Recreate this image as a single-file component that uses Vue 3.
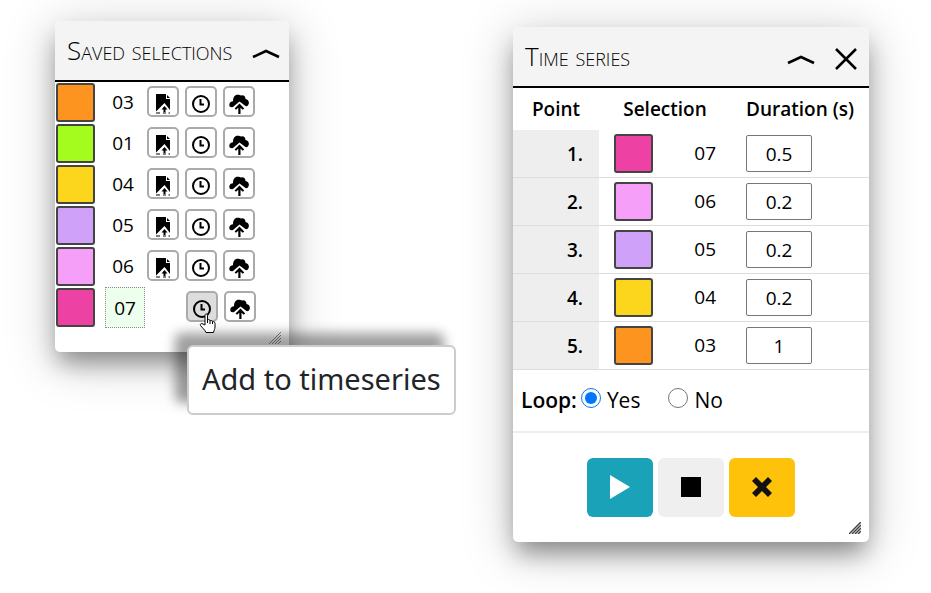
<script setup>
import { ref } from 'vue'

const selections = [
  { name: '03', color: '#fc941f', saved: true },
  { name: '01', color: '#a4fc1f', saved: true },
  { name: '04', color: '#fcd61c', saved: true },
  { name: '05', color: '#d0a1f8', saved: true },
  { name: '06', color: '#f59ff8', saved: true },
  { name: '07', color: '#ed42a4', saved: false },
]
const points = ref([
  { name: '07', color: '#ed42a4', duration: '0.5' },
  { name: '06', color: '#f59ff8', duration: '0.2' },
  { name: '05', color: '#d0a1f8', duration: '0.2' },
  { name: '04', color: '#fcd61c', duration: '0.2' },
  { name: '03', color: '#fc941f', duration: '1' },
])
const loop = ref('yes')
</script>

<template>
  <main class="desktop">
    <section class="panel saved">
      <header class="panel-head">
        <h2>Saved selections</h2>
        <button class="bare" aria-label="Collapse saved selections">
          <svg width="30" height="12" viewBox="0 0 30 12"><path d="M2 10 15 4l13 6" /></svg>
        </button>
      </header>
      <ul class="list">
        <li v-for="s in selections" :key="s.name" class="item" :class="{ current: !s.saved }">
          <span class="swatch" :style="{ background: s.color }"></span>
          <span class="name">{{ s.name }}</span>
          <span class="actions">
            <button v-if="s.saved" class="tool" aria-label="Save to file">
              <svg width="16" height="20" viewBox="0 0 16 20">
                <path d="M1 0h10v5h4v11L9.500 9 1 17.500z" />
                <path d="M12 1l3 3h-3z" />
                <path d="m9.500 12 3 3.500h-2V18h-2v-2.500h-2z" />
                <path d="M1 18.500h4v1H1zM8 18.500h3v1H8zM13.500 18.500H15v1h-1.500z" />
              </svg>
            </button>
            <button class="tool" :class="{ hover: !s.saved }" aria-label="Add to timeseries">
              <svg width="20" height="20" viewBox="0 0 20 20" class="line">
                <circle cx="10" cy="10" r="8" />
                <path d="M9.500 5v5.500H13" />
              </svg>
            </button>
            <button class="tool" aria-label="Upload selection">
              <svg width="20" height="20" viewBox="0 0 20 20">
                <path d="M.3 11C.3 8.500 2 7.500 4 7.300 4 3 6 .5 9 .8c1.500 0 2 .8 3.500.6 2.500-.3 4 1.200 4 3.600 2.500.5 3.800 2.500 3.300 4.500-.4 2-1.800 3-3.300 2.500L10.500 7.500 4 13c-2 .8-3.700-.2-3.700-2z" />
                <path d="m10.500 9.500 4.700 5-1.400 1.200-2.300-2V20h-2.200v-6.300l-2.300 2-1.400-1.200z" />
              </svg>
            </button>
          </span>
        </li>
      </ul>
      <svg class="grip" width="12" height="12" viewBox="0 0 12 12"><path d="M0 12 12 0M3 12l9-9M6 12l6-6M9 12l3-3" /></svg>
    </section>

    <div class="tooltip" role="tooltip">Add to timeseries</div>
    <svg class="pointer" width="18" height="21" viewBox="0 0 18 21">
      <path d="M6 12V2.500C6 .5 8.500.5 8.500 2.500V7c1-.8 2.500-.4 2.500.8 1-.7 2.500-.2 2.500 1 1-.5 2.500 0 2.500 1.500V14c0 2-1 3-1.500 5.500H7C6 17 3 14.500 1.500 12.500c-.8-1.500 1-2.500 2.500-1.500z" />
      <path d="M8.500 7v3M11 8v3M13.500 9v2" />
    </svg>

    <section class="panel series">
      <header class="panel-head">
        <h2>Time series</h2>
        <button class="bare" aria-label="Collapse time series">
          <svg width="30" height="12" viewBox="0 0 30 12"><path d="M2 10 15 4l13 6" /></svg>
        </button>
        <button class="bare" aria-label="Close time series">
          <svg width="24" height="24" viewBox="0 0 24 24"><path d="m2 2 20 20M22 2 2 22" /></svg>
        </button>
      </header>
      <table>
        <thead>
          <tr><th class="c-point">Point</th><th class="c-sel">Selection</th><th class="c-dur">Duration (s)</th></tr>
        </thead>
        <tbody>
          <tr v-for="(p, i) in points" :key="p.name">
            <th scope="row">{{ i + 1 }}.</th>
            <td>
              <div class="pick">
                <span class="swatch" :style="{ background: p.color }"></span>
                <span class="label">{{ p.name }}</span>
              </div>
            </td>
            <td><input v-model="p.duration" type="text" class="duration" :aria-label="'Duration of point ' + (i + 1)"></td>
          </tr>
        </tbody>
      </table>
      <div class="loop" role="radiogroup" aria-labelledby="loop-label">
        <b id="loop-label">Loop:</b>
        <label><input v-model="loop" type="radio" name="loop" value="yes"><span>Yes</span></label>
        <label><input v-model="loop" type="radio" name="loop" value="no"><span>No</span></label>
      </div>
      <div class="controls">
        <button class="play" aria-label="Play"><svg width="20" height="24" viewBox="0 0 20 24"><path d="M0 0v24l20-12z" /></svg></button>
        <button class="stop" aria-label="Stop"><svg width="20" height="20" viewBox="0 0 20 20"><path d="M0 0h20v20H0z" /></svg></button>
        <button class="clear" aria-label="Clear"><svg width="20" height="20" viewBox="0 0 20 20"><path d="m4 0 6 6 6-6 4 4-6 6 6 6-4 4-6-6-6 6-4-4 6-6-6-6z" /></svg></button>
      </div>
      <svg class="grip dark" width="12" height="12" viewBox="0 0 12 12"><path d="M0 12 12 0M3 12l9-9M6 12l6-6M9 12l3-3" /></svg>
    </section>
  </main>
</template>

<style>
body {
  background: #fff;
}
</style>

<style scoped>
.desktop {
  position: relative;
  min-height: 100vh;
  overflow: hidden;
  font-family: "Open Sans", "Noto Sans", sans-serif;
  font-size: 19px;
  color: #000;
}
.desktop * {
  box-sizing: border-box;
}
svg {
  display: block;
}
button {
  padding: 0;
  font: inherit;
  cursor: pointer;
}
.panel {
  position: absolute;
  background: #fff;
  border-radius: 5px;
  box-shadow: 0 14px 24px -4px rgba(0, 0, 0, 0.4), 0 8px 50px 4px rgba(0, 0, 0, 0.18);
}
.saved {
  left: 55px;
  top: 21px;
  width: 234px;
  padding-bottom: 24px;
}
.series {
  left: 513px;
  top: 27px;
  width: 356px;
}
.panel-head {
  display: flex;
  align-items: center;
  height: 61px;
  padding: 4px 11px 0 12px;
  background: #f4f4f4;
  border-bottom: 2px solid #000;
  border-radius: 5px 5px 0 0;
}
h2 {
  flex: 1;
  margin: 0 0 6px;
  font-size: 26px;
  font-weight: 350;
  font-variant: small-caps;
  line-height: 32px;
  white-space: nowrap;
}
.bare {
  border: 0;
  background: none;
}
.bare path {
  fill: none;
  stroke: #000;
  stroke-width: 2.500;
}
.saved .panel-head {
  padding-right: 8px;
}
.series .panel-head {
  gap: 18px;
}
.swatch {
  width: 39px;
  height: 39px;
  border: 2px solid #444;
  border-radius: 3px;
}
.list {
  list-style: none;
  margin: 0;
  padding: 0;
}
.item {
  display: flex;
  align-items: center;
  height: 41px;
  padding: 0 34px 0 1px;
}
.name {
  display: grid;
  place-items: center;
  width: 40px;
  height: 41px;
  margin-left: 8px;
  padding-bottom: 2px;
  border: 1px solid transparent;
}
.current .name {
  margin-left: 10px;
  padding-bottom: 0;
  background: #edffed;
  border: 1px dotted #888;
}
.current {
  padding-right: 33px;
}
.actions {
  flex: 1;
  display: flex;
  justify-content: flex-end;
  gap: 6px;
}
.tool {
  display: grid;
  place-items: center;
  width: 32px;
  height: 31px;
  padding-top: 4px;
  margin-bottom: 2px;
  border: 2px solid #aaa;
  border-radius: 5px;
  background: #fff;
}
.tool.hover {
  background: #ddd;
}
.line {
  fill: none;
  stroke: #000;
  stroke-width: 2;
}
.grip {
  position: absolute;
  right: 8px;
  bottom: 8px;
  stroke: #888;
  stroke-width: 1;
}
.grip.dark {
  stroke: #444;
  stroke-width: 1.500;
}
.tooltip {
  position: absolute;
  left: 187px;
  top: 345px;
  padding: 12px 13px 14px;
  border: 2px solid #ccc;
  border-radius: 6px;
  background: #fff;
  box-shadow: -12px -12px 12px rgba(0, 0, 0, 0.38);
  color: #212529;
  font-family: "Noto Sans", sans-serif;
  font-size: 29px;
  line-height: 40px;
  white-space: nowrap;
}
.pointer {
  position: absolute;
  left: 199px;
  top: 313px;
  fill: #fff;
  stroke: #000;
  stroke-width: 1;
}
table {
  width: 100%;
  border-spacing: 0;
  table-layout: fixed;
}
th {
  font-weight: 600;
}
thead th {
  height: 42px;
  padding: 0;
}
.c-point {
  width: 86px;
}
.c-sel {
  width: 132px;
}
tbody th,
td {
  height: 48px;
  border-bottom: 1px solid #ddd;
}
tbody th {
  padding: 0 16px 0 0;
  background: #eee;
  text-align: right;
}
td {
  padding: 0 15px;
}
.pick {
  display: flex;
  align-items: center;
  justify-content: space-between;
}
.label {
  padding-bottom: 2px;
}
.duration {
  display: block;
  width: 66px;
  height: 37px;
  border: 1px solid #767676;
  border-radius: 2px;
  background: #fff;
  font: inherit;
  text-align: center;
}
.loop {
  display: flex;
  align-items: center;
  gap: 4px;
  height: 63px;
  padding: 0 8px 2px;
  border-bottom: 2px solid #eee;
  font-size: 21px;
}
.loop b {
  font-weight: 600;
}
.loop label {
  display: flex;
  align-items: center;
  gap: 6px;
  margin-right: 24px;
}
.loop input {
  width: 20px;
  height: 20px;
  margin: 0 0 4px;
  accent-color: #0075ff;
}
.controls {
  display: flex;
  justify-content: center;
  gap: 5px;
  padding: 25px 0;
}
.controls button {
  display: grid;
  place-items: center;
  width: 66px;
  height: 59px;
  padding-bottom: 2px;
  border: 0;
  border-radius: 6px;
}
.play {
  background: #19a2b8;
  fill: #fff;
}
.stop {
  background: #efefef;
}
.clear {
  background: #ffc20a;
  fill: #111;
}
</style>
